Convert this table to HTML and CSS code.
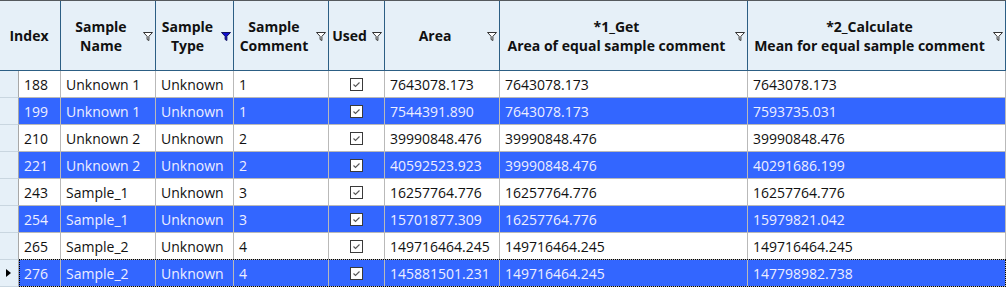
FILE: index.html
```html
<!DOCTYPE html>
<html>
<head>
<meta charset="utf-8">
<link rel="stylesheet" href="styles.css">
</head>
<body>
<div class="grid">
  <div class="hrow">
    <div class="hc span2"><span class="ht">Index</span></div>
    <div class="hc"><span class="ht">Sample<br>Name</span><svg class="fl" viewBox="0 0 10 9"><path d="M0.5 0.5H9.5L5.9 4.3V8.5L4.1 7.5V4.3Z"/></svg></div>
    <div class="hc"><span class="ht">Sample<br>Type</span><svg class="fl on" viewBox="0 0 10 9"><path d="M0.5 0.5H9.5L5.9 4.3V8.5L4.1 7.5V4.3Z"/></svg></div>
    <div class="hc"><span class="ht">Sample<br>Comment</span><svg class="fl" viewBox="0 0 10 9"><path d="M0.5 0.5H9.5L5.9 4.3V8.5L4.1 7.5V4.3Z"/></svg></div>
    <div class="hc"><span class="ht">Used</span><svg class="fl" viewBox="0 0 10 9"><path d="M0.5 0.5H9.5L5.9 4.3V8.5L4.1 7.5V4.3Z"/></svg></div>
    <div class="hc"><span class="ht">Area</span><svg class="fl" viewBox="0 0 10 9"><path d="M0.5 0.5H9.5L5.9 4.3V8.5L4.1 7.5V4.3Z"/></svg></div>
    <div class="hc"><span class="ht">*1_Get<br>Area of equal sample comment</span><svg class="fl" viewBox="0 0 10 9"><path d="M0.5 0.5H9.5L5.9 4.3V8.5L4.1 7.5V4.3Z"/></svg></div>
    <div class="hc"><span class="ht">*2_Calculate<br>Mean for equal sample comment</span><svg class="fl" viewBox="0 0 10 9"><path d="M0.5 0.5H9.5L5.9 4.3V8.5L4.1 7.5V4.3Z"/></svg></div>
  </div>

  <div class="row">
    <div class="rh"></div><div class="c">188</div><div class="c">Unknown 1</div><div class="c">Unknown</div><div class="c">1</div>
    <div class="c ck"><span class="box"><svg viewBox="0 0 11 11"><path d="M2.5 5.5L4.5 7.5L8.5 3.5"/></svg></span></div>
    <div class="c">7643078.173</div><div class="c">7643078.173</div><div class="c">7643078.173</div>
  </div>
  <div class="row sel">
    <div class="rh"></div><div class="c">199</div><div class="c">Unknown 1</div><div class="c">Unknown</div><div class="c">1</div>
    <div class="c ck"><span class="box"><svg viewBox="0 0 11 11"><path d="M2.5 5.5L4.5 7.5L8.5 3.5"/></svg></span></div>
    <div class="c">7544391.890</div><div class="c">7643078.173</div><div class="c">7593735.031</div>
  </div>
  <div class="row">
    <div class="rh"></div><div class="c">210</div><div class="c">Unknown 2</div><div class="c">Unknown</div><div class="c">2</div>
    <div class="c ck"><span class="box"><svg viewBox="0 0 11 11"><path d="M2.5 5.5L4.5 7.5L8.5 3.5"/></svg></span></div>
    <div class="c">39990848.476</div><div class="c">39990848.476</div><div class="c">39990848.476</div>
  </div>
  <div class="row sel">
    <div class="rh"></div><div class="c">221</div><div class="c">Unknown 2</div><div class="c">Unknown</div><div class="c">2</div>
    <div class="c ck"><span class="box"><svg viewBox="0 0 11 11"><path d="M2.5 5.5L4.5 7.5L8.5 3.5"/></svg></span></div>
    <div class="c">40592523.923</div><div class="c">39990848.476</div><div class="c">40291686.199</div>
  </div>
  <div class="row">
    <div class="rh"></div><div class="c">243</div><div class="c">Sample_1</div><div class="c">Unknown</div><div class="c">3</div>
    <div class="c ck"><span class="box"><svg viewBox="0 0 11 11"><path d="M2.5 5.5L4.5 7.5L8.5 3.5"/></svg></span></div>
    <div class="c">16257764.776</div><div class="c">16257764.776</div><div class="c">16257764.776</div>
  </div>
  <div class="row sel">
    <div class="rh"></div><div class="c">254</div><div class="c">Sample_1</div><div class="c">Unknown</div><div class="c">3</div>
    <div class="c ck"><span class="box"><svg viewBox="0 0 11 11"><path d="M2.5 5.5L4.5 7.5L8.5 3.5"/></svg></span></div>
    <div class="c">15701877.309</div><div class="c">16257764.776</div><div class="c">15979821.042</div>
  </div>
  <div class="row">
    <div class="rh"></div><div class="c">265</div><div class="c">Sample_2</div><div class="c">Unknown</div><div class="c">4</div>
    <div class="c ck"><span class="box"><svg viewBox="0 0 11 11"><path d="M2.5 5.5L4.5 7.5L8.5 3.5"/></svg></span></div>
    <div class="c">149716464.245</div><div class="c">149716464.245</div><div class="c">149716464.245</div>
  </div>
  <div class="row sel focus">
    <div class="rh"><svg class="arrow" viewBox="0 0 5 8"><path d="M0 0L5 4L0 8Z"/></svg></div><div class="c">276</div><div class="c">Sample_2</div><div class="c">Unknown</div><div class="c">4</div>
    <div class="c ck"><span class="box"><svg viewBox="0 0 11 11"><path d="M2.5 5.5L4.5 7.5L8.5 3.5"/></svg></span></div>
    <div class="c">145881501.231</div><div class="c">149716464.245</div><div class="c">147798982.738</div>
  </div>
</div>
</body>
</html>
```

FILE: styles.css
```css
html, body {
  margin: 0;
  padding: 0;
  background: #ffffff;
  overflow: hidden;
}
body {
  width: 1006px;
  height: 287px;
  font-family: "Open Sans", "Noto Sans", sans-serif;
  font-size: 14px;
  color: #111;
}
.grid {
  width: 1006px;
  border-top: 1px solid #555a5e;
}
.hrow, .row {
  display: grid;
  grid-template-columns: 19px 42px 95px 78px 95px 56px 115px 248px 258px;
}
.hrow {
  height: 70px;
  background: #e6f0f8;
  border-bottom: 1px solid #2c5e84;
  box-sizing: border-box;
}
.hc {
  display: flex;
  align-items: center;
  border-right: 1px solid #2c5e84;
  box-sizing: border-box;
  padding-right: 2px;
  font-weight: 700;
  line-height: 19px;
}
.hc.span2 { grid-column: span 2; }
.ht {
  flex: 1;
  text-align: center;
  white-space: nowrap;
}
.fl {
  width: 10px;
  height: 9px;
  flex: none;
  margin-left: 2px;
  margin-top: 1px;
}
.fl path {
  fill: #fff;
  stroke: #333;
  stroke-width: 1;
}
.fl.on path {
  fill: #1010d0;
  stroke: #101060;
}
.row {
  height: 27px;
  box-sizing: border-box;
  position: relative;
}
.c {
  display: flex;
  align-items: center;
  padding-left: 5px;
  border-right: 1px solid #b9b9b9;
  border-bottom: 1px solid #b9b9b9;
  box-sizing: border-box;
  white-space: nowrap;
  overflow: hidden;
}
.rh {
  background: #e6f0f8;
  border-right: 1px solid #a8a8a8;
  border-bottom: 1px solid #c9d6e0;
  box-sizing: border-box;
  display: flex;
  align-items: center;
  padding-left: 6px;
}
.arrow {
  width: 5px;
  height: 8px;
}
.arrow path { fill: #000; }
.ck {
  justify-content: center;
  padding-left: 0;
}
.box {
  width: 13px;
  height: 13px;
  box-sizing: border-box;
  border: 1px solid #3a3a3a;
  background: #fff;
  display: flex;
}
.box svg {
  width: 11px;
  height: 11px;
}
.box path {
  fill: none;
  stroke: #555;
  stroke-width: 1.1;
}
.sel .c {
  background: #3366ff;
  color: #eeeeff;
}
.focus::after {
  content: "";
  position: absolute;
  left: 19px;
  right: 0;
  top: -1px;
  bottom: 0;
  border: 1px dotted #000;
  pointer-events: none;
}
```
